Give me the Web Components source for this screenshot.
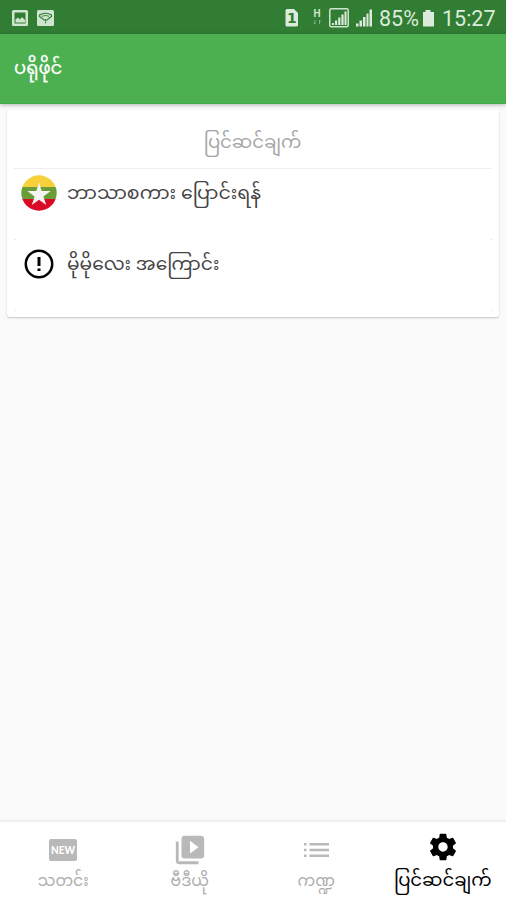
<!DOCTYPE html>
<html lang="my">
<head>
<meta charset="utf-8">
<title>ပရိုဖိုင်</title>
<style>
html,body{margin:0;height:100%}
body{background:#fafafa;font-family:"Noto Sans Myanmar","Noto Sans",Padauk,sans-serif;overflow:hidden}
</style>
</head>
<body>
<profile-screen></profile-screen>
<script>
const define = (name, html) => customElements.define(name, class extends HTMLElement {
  connectedCallback() {
    if (this.shadowRoot) return;
    const t = document.createElement('template');
    t.innerHTML = html;
    this.attachShadow({mode:'open'}).append(t.content.cloneNode(true));
  }
});

define('status-bar', `
<style>
:host{display:flex;height:34px;box-sizing:border-box;background:#307d33;color:#dcebdc;align-items:center;padding:2px 12px 0 11px;font:21.5px/30px Roboto,sans-serif}
.gap{flex:1}
svg{display:block;flex:none}
.pct{margin-left:6px;width:38px;white-space:nowrap;padding-top:1px}
.time{margin-left:8px;width:52px;white-space:nowrap;padding-top:1px}
</style>
<svg width="44" height="18" viewBox="0 0 44 18"><path fill="#cfe5cf" fill-rule="evenodd" d="M2.500 1h13a1.500 1.500 0 0 1 1.500 1.500v13a1.500 1.500 0 0 1-1.500 1.500h-13A1.500 1.500 0 0 1 1 15.500v-13A1.500 1.500 0 0 1 2.500 1zM3.500 3.500v11h11v-11z"/><path fill="#cfe5cf" d="M4.500 13.500v-3l2.500-2 2 2 2-2.500 3 3v2.500z"/><rect x="26" y="1" width="17" height="16" rx="1.500" fill="#cfe5cf"/><path d="M28.500 7.500V6Q34.500 2.500 40.500 6v1.500L36 11h-3z" fill="none" stroke="#307d33" stroke-width="1.200"/><path d="M31 7.500q3.500-2 7 0M34.500 10v4.500" stroke="#307d33" stroke-width="1.100" fill="none" opacity=".8"/></svg>
<span class="gap"></span>
<svg width="89" height="20" viewBox="0 0 89 20">
<path fill="#dcebdc" d="M3 1h7l4 4v12a1.500 1.500 0 0 1-1.500 1.500H3A1.500 1.500 0 0 1 1.500 17V2.500A1.500 1.500 0 0 1 3 1z"/><text x="7.800" y="15" text-anchor="middle" font-family="DejaVu Sans" font-weight="bold" font-size="14" fill="#307d33">1</text>
<text x="33" y="8.500" text-anchor="middle" font-family="Roboto" font-weight="bold" font-size="10" fill="#cfe5cf">H</text><path d="M31 12v4m-1.500-1.500l1.500 1.500M35.500 16v-4m1.500 1.500l-1.500-1.500" stroke="#cfe5cf" opacity=".5" fill="none"/>
<rect x="45.800" y=".8" width="18.400" height="18" rx="1.500" fill="none" stroke="#cfe5cf" stroke-width="1.500"/>
<g fill="#dcebdc"><path d="M48 15h2v2h-2zM51 12.500h2.200v4.500H51zM54.200 9.500h2.200V17h-2.200zM57.400 6.500h2.200V17h-2.200zM60.500 3.500h2V17h-2z"/><path d="M72 15.500h2.500v3H72zM75.500 12.500H78v6h-2.500zM79 9h2.500v9.500H79zM82.500 5.500h2v13h-2zM85.500 1.500H88v17h-2.500z"/></g></svg>
<span class="pct"><slot name="battery"></slot></span>
<svg width="12" height="18" viewBox="0 0 12 18" style="margin-left:5px"><path fill="#dcebdc" d="M3.500 1h5v2H12v14.500H1V3h2.500z"/></svg>
<span class="time"><slot name="time"></slot></span>`);

define('app-bar', `
<style>
:host{display:flex;align-items:center;height:70px;box-sizing:border-box;padding:2px 14px 0;background:#4caf50;border-bottom:1px solid #3dad43;color:#fff;font-size:18px;line-height:40px;box-shadow:0 1px 4px rgba(0,0,0,.28);position:relative;z-index:1;-webkit-text-stroke:.25px #fff}
</style><slot></slot>`);

define('settings-card', `
<style>
:host{display:block;box-sizing:border-box;margin:6px 7px 0;height:207px;padding:0 7px;background:#fff;border-radius:3px;box-shadow:0 1px 2px rgba(0,0,0,.22)}
header{display:flex;justify-content:center;align-items:center;height:59px;box-sizing:border-box;padding:10px 1px 0 0;border-bottom:1px solid #eee;color:#a6a6a6;font-size:18.100px;line-height:40px}
</style><header><slot name="heading"></slot></header><slot></slot>`);

define('setting-row', `
<style>
:host{display:flex;height:71px;box-sizing:border-box;padding:6px 7px 0;background:linear-gradient(#ececec,#ececec) left bottom/2px 1px no-repeat,linear-gradient(#ececec,#ececec) right bottom/2px 1px no-repeat}
.icon{display:flex;width:36px;height:36px;align-items:center;justify-content:center;flex:none}
.label{margin-left:10px;font-size:18.950px;line-height:40px;color:#444;white-space:nowrap}
:host(:last-of-type) .label{font-size:18.600px}
</style><span class="icon"><slot name="icon"></slot></span><span class="label"><slot></slot></span>`);

define('tab-bar', `
<style>
:host{display:grid;grid-template-columns:repeat(4,1fr);height:79px;box-sizing:border-box;background:#fff;border-top:1px solid #eee;box-shadow:0 -1px 2px rgba(0,0,0,.06)}
</style><slot></slot>`);

define('tab-item', `
<style>
:host{display:flex;flex-direction:column;align-items:center;padding-top:10px;color:#adadad;font-size:15.700px}
:host([active]){color:#000;font-size:18.100px;padding-top:8px}
.icon{display:flex;height:35px;align-items:center}
.label{height:31px;line-height:31px;white-space:nowrap}
:host([active]) .label{height:35px;line-height:35px}
</style><span class="icon"><slot name="icon"></slot></span><span class="label"><slot></slot></span>`);

define('profile-screen', `
<style>
:host{display:flex;flex-direction:column;height:900px;width:506px}
main{flex:1}
svg{display:block}
</style>
<status-bar><span slot="battery">85%</span><span slot="time">15:27</span></status-bar>
<app-bar>ပရိုဖိုင်</app-bar>
<main><settings-card><span slot="heading">ပြင်ဆင်ချက်</span>
<setting-row><svg slot="icon" width="36" height="36" viewBox="0 0 36 36"><defs><clipPath id="disc"><circle cx="18" cy="18" r="17.700"/></clipPath></defs><g clip-path="url(#disc)"><path fill="#f7d03c" d="M0 0h36v12H0z"/><path fill="#6a9d36" d="M0 12h36v12H0z"/><path fill="#d80a25" d="M0 24h36v12H0z"/></g><path fill="#f4f4f4" d="M18 7.500l2.700 8.600h9l-7.300 5.300 2.800 8.600-7.200-5.300-7.200 5.300 2.800-8.600-7.300-5.300h9z"/></svg>ဘာသာစကား ပြောင်းရန်</setting-row>
<setting-row><svg slot="icon" width="36" height="36" viewBox="0 0 36 36"><circle cx="18" cy="18" r="13.200" fill="none" stroke="#000" stroke-width="2.500"/><path d="M16.500 11h3v9h-3zM16.500 22.500h3v2.500h-3z"/></svg>မိုမိုလေး အကြောင်း</setting-row>
</settings-card></main>
<tab-bar>
<tab-item><svg slot="icon" width="30" height="24" viewBox="0 0 30 24"><rect x="1" y="1" width="28" height="22" rx="2" fill="#b9b9b9"/><text x="15" y="16" text-anchor="middle" textLength="24" lengthAdjust="spacingAndGlyphs" font-family="Lato,sans-serif" font-weight="900" font-size="11.500" fill="#fff">NEW</text></svg>သတင်း</tab-item>
<tab-item><svg slot="icon" width="34" height="34" viewBox="0 0 24 24"><path fill="#b9b9b9" d="M4 6H2v14c0 1.100.9 2 2 2h14v-2H4V6zm16-4H8c-1.100 0-2 .9-2 2v12c0 1.100.9 2 2 2h12c1.100 0 2-.9 2-2V4c0-1.100-.9-2-2-2zm-8 12.500v-9l6 4.500-6 4.500z"/></svg>ဗီဒီယို</tab-item>
<tab-item><svg slot="icon" width="26" height="16" viewBox="0 0 26 16" style="margin-left:2px"><path fill="#b9b9b9" d="M0 1h2.500v2.500H0zM5.500 1H25v2.500H5.500zM0 6.800h2.500v2.500H0zM5.500 6.800H25v2.500H5.500zM0 12.500h2.500V15H0zM5.500 12.500H25V15H5.500z"/></svg>ကဏ္ဍ</tab-item>
<tab-item active><svg slot="icon" width="32" height="32" viewBox="0 0 24 24" style="margin:-1px 0 0 1px"><path d="M19.430 12.980c.04-.32.070-.64.070-.98s-.03-.66-.07-.98l2.110-1.650c.19-.15.240-.42.120-.64l-2-3.460c-.12-.22-.39-.3-.61-.22l-2.490 1c-.52-.4-1.080-.73-1.690-.98l-.38-2.650C14.460 2.180 14.250 2 14 2h-4c-.25 0-.46.18-.49.42l-.38 2.650c-.61.25-1.170.59-1.690.98l-2.490-1c-.23-.09-.49 0-.61.22l-2 3.460c-.13.22-.07.49.12.64l2.110 1.650c-.04.32-.07.65-.07.98s.03.660.07.980l-2.110 1.650c-.19.15-.24.42-.12.64l2 3.460c.12.22.39.3.610.22l2.490-1c.52.4 1.080.73 1.690.98l.38 2.650c.03.24.24.42.49.42h4c.25 0 .46-.18.49-.42l.38-2.650c.61-.25 1.170-.59 1.690-.98l2.490 1c.23.090.49 0 .61-.22l2-3.460c.12-.22.070-.49-.12-.64l-2.110-1.650zM12 15.500c-1.930 0-3.500-1.570-3.500-3.500s1.570-3.500 3.500-3.500 3.500 1.570 3.500 3.500-1.570 3.500-3.500 3.500z"/></svg>ပြင်ဆင်ချက်</tab-item>
</tab-bar>`);
</script>
</body>
</html>
